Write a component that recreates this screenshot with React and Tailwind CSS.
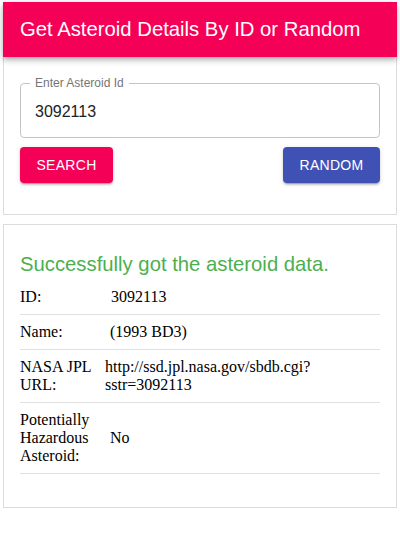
import React from "react";

export default function App() {
  const rows = [
    { label: ["ID:"], value: ["3092113"], vx: "pl-[91px]" },
    { label: ["Name:"], value: ["(1993 BD3)"], vx: "pl-[90px]" },
    { label: ["NASA JPL", "URL:"], value: ["http://ssd.jpl.nasa.gov/sbdb.cgi?", "sstr=3092113"], vx: "pl-[85px]" },
    { label: ["Potentially", "Hazardous", "Asteroid:"], value: ["No"], vx: "pl-[90px]" },
  ];
  return (
    <div className="w-[400px] h-[550px] bg-white px-[3px] pt-[2px]" style={{ fontFamily: '"Liberation Sans", Arial, sans-serif' }}>
      <div className="relative z-10 h-[55px] bg-[#f50057] flex items-center pl-[17px] shadow-[0_2px_4px_-1px_rgba(0,0,0,0.2),0_4px_5px_0_rgba(0,0,0,0.14),0_1px_10px_0_rgba(0,0,0,0.12)]">
        <h1 className="text-white text-[20.3px] leading-none">Get Asteroid Details By ID or Random</h1>
      </div>
      <div className="border border-[#dcdcdc] border-t-0 h-[158px] px-[16px] pt-[26px]">
        <div className="relative h-[55px] border border-[#c4c4c4] rounded-[4px] flex items-center pl-[14px] pt-[2px]">
          <span className="absolute -top-[8px] left-[9px] bg-white px-[5px] text-[12px] leading-[14px] text-[#757575]">Enter Asteroid Id</span>
          <span className="text-[16px] text-[#222]">3092113</span>
        </div>
        <div className="flex justify-between mt-[9px]">
          <button className="h-[36px] w-[93px] rounded-[4px] bg-[#f50057] text-white text-[14px] tracking-[0.3px] shadow-[0_3px_1px_-2px_rgba(0,0,0,0.2),0_2px_2px_0_rgba(0,0,0,0.14),0_1px_5px_0_rgba(0,0,0,0.12)]">SEARCH</button>
          <button className="h-[36px] w-[97px] rounded-[4px] bg-[#3f51b5] text-white text-[14px] tracking-[0.3px] shadow-[0_3px_1px_-2px_rgba(0,0,0,0.2),0_2px_2px_0_rgba(0,0,0,0.14),0_1px_5px_0_rgba(0,0,0,0.12)]">RANDOM</button>
        </div>
      </div>
      <div className="mt-[9px] border border-[#dcdcdc] h-[284px] px-[16px] pt-[27px]">
        <div className="text-[#4caf50] text-[20.3px] leading-[24px]">Successfully got the asteroid data.</div>
        <div className="mt-[6px]" style={{ fontFamily: '"Liberation Serif", "Times New Roman", serif' }}>
          {rows.map((r, i) => (
            <div key={i} className={`flex border-b border-[#e0e0e0] pb-[8px] ${i === 0 ? "pt-[6px]" : "pt-[8px]"} text-[16px] leading-[18px] text-black`}>
              <div className="w-0 shrink-0 whitespace-nowrap">
                {r.label.map((l, j) => <div key={j}>{l}</div>)}
              </div>
              <div className={`${r.vx} flex flex-col justify-center`}>
                {r.value.map((v, j) => <div key={j}>{v}</div>)}
              </div>
            </div>
          ))}
        </div>
      </div>
    </div>
  );
}
